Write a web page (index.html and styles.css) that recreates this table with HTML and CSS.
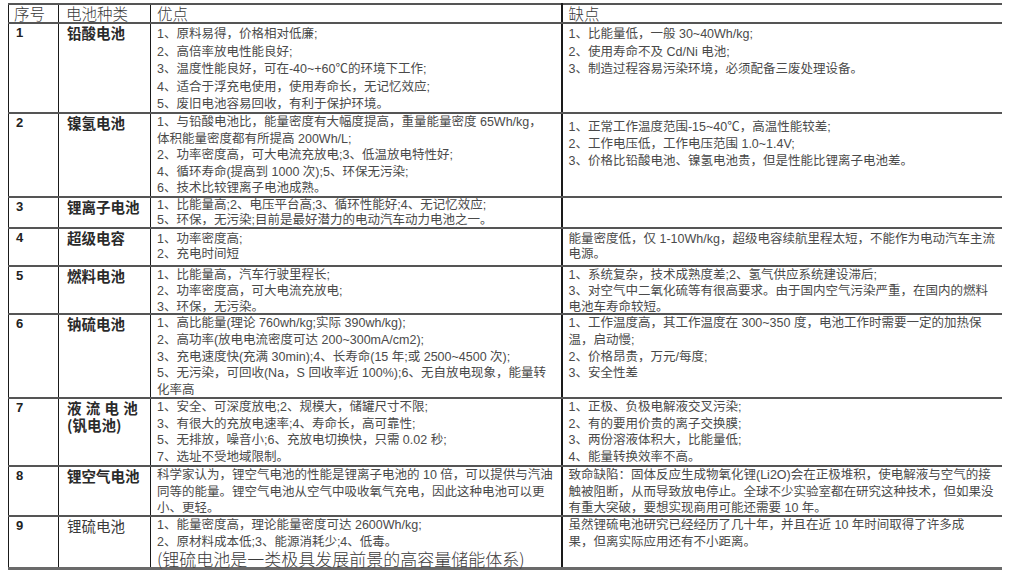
FILE: index.html
```html
<!DOCTYPE html>
<html lang="zh-CN">
<head>
<meta charset="utf-8">
<title>电池种类对比</title>
<link rel="stylesheet" href="styles.css">
</head>
<body>
<table class="cmp">
  <colgroup>
    <col class="c-no"><col class="c-type"><col class="c-pro"><col class="c-con">
  </colgroup>
  <tr class="r-head">
    <th>序号</th><th>电池种类</th><th>优点</th><th>缺点</th>
  </tr>
  <tr class="r1">
    <td class="no">1</td>
    <td class="type">铅酸电池</td>
    <td class="txt">
      <div>1、原料易得，价格相对低廉;</div>
      <div>2、高倍率放电性能良好;</div>
      <div>3、温度性能良好，可在-40~+60℃的环境下工作;</div>
      <div>4、适合于浮充电使用，使用寿命长，无记忆效应;</div>
      <div>5、废旧电池容易回收，有利于保护环境。</div>
    </td>
    <td class="txt">
      <div>1、比能量低，一般 30~40Wh/kg;</div>
      <div>2、使用寿命不及 Cd/Ni 电池;</div>
      <div>3、制造过程容易污染环境，必须配备三废处理设备。</div>
    </td>
  </tr>
  <tr class="r2">
    <td class="no">2</td>
    <td class="type">镍氢电池</td>
    <td class="txt">
      <div>1、与铅酸电池比，能量密度有大幅度提高，重量能量密度 65Wh/kg，</div>
      <div>体积能量密度都有所提高 200Wh/L;</div>
      <div>2、功率密度高，可大电流充放电;3、低温放电特性好;</div>
      <div>4、循环寿命(提高到 1000 次);5、环保无污染;</div>
      <div>6、技术比较锂离子电池成熟。</div>
    </td>
    <td class="txt low">
      <div>1、正常工作温度范围-15~40℃，高温性能较差;</div>
      <div>2、工作电压低，工作电压范围 1.0~1.4V;</div>
      <div>3、价格比铅酸电池、镍氢电池贵，但是性能比锂离子电池差。</div>
    </td>
  </tr>
  <tr class="r3">
    <td class="no">3</td>
    <td class="type">锂离子电池</td>
    <td class="txt">
      <div>1、比能量高;2、电压平台高;3、循环性能好;4、无记忆效应;</div>
      <div>5、环保，无污染;目前是最好潜力的电动汽车动力电池之一。</div>
    </td>
    <td class="txt"></td>
  </tr>
  <tr class="r4">
    <td class="no">4</td>
    <td class="type">超级电容</td>
    <td class="txt">
      <div>1、功率密度高;</div>
      <div>2、充电时间短</div>
    </td>
    <td class="txt">
      <div>能量密度低，仅 1-10Wh/kg，超级电容续航里程太短，不能作为电动汽车主流</div>
      <div>电源。</div>
    </td>
  </tr>
  <tr class="r5">
    <td class="no">5</td>
    <td class="type">燃料电池</td>
    <td class="txt">
      <div>1、比能量高，汽车行驶里程长;</div>
      <div>2、功率密度高，可大电流充放电;</div>
      <div>3、环保，无污染。</div>
    </td>
    <td class="txt">
      <div>1、系统复杂，技术成熟度差;2、氢气供应系统建设滞后;</div>
      <div>3、对空气中二氧化硫等有很高要求。由于国内空气污染严重，在国内的燃料</div>
      <div>电池车寿命较短。</div>
    </td>
  </tr>
  <tr class="r6">
    <td class="no">6</td>
    <td class="type">钠硫电池</td>
    <td class="txt">
      <div>1、高比能量(理论 760wh/kg;实际 390wh/kg);</div>
      <div>2、高功率(放电电流密度可达 200~300mA/cm2);</div>
      <div>3、充电速度快(充满 30min);4、长寿命(15 年;或 2500~4500 次);</div>
      <div>5、无污染，可回收(Na，S 回收率近 100%);6、无自放电现象，能量转</div>
      <div>化率高</div>
    </td>
    <td class="txt">
      <div>1、工作温度高，其工作温度在 300~350 度，电池工作时需要一定的加热保</div>
      <div>温，启动慢;</div>
      <div>2、价格昂贵，万元/每度;</div>
      <div>3、安全性差</div>
    </td>
  </tr>
  <tr class="r7">
    <td class="no">7</td>
    <td class="type">
      <div class="spread">液 流 电 池</div>
      <div>(钒电池)</div>
    </td>
    <td class="txt">
      <div>1、安全、可深度放电;2、规模大，储罐尺寸不限;</div>
      <div>3、有很大的充放电速率;4、寿命长，高可靠性;</div>
      <div>5、无排放，噪音小;6、充放电切换快，只需 0.02 秒;</div>
      <div>7、选址不受地域限制。</div>
    </td>
    <td class="txt">
      <div>1、正极、负极电解液交叉污染;</div>
      <div>2、有的要用价贵的离子交换膜;</div>
      <div>3、两份溶液体积大，比能量低;</div>
      <div>4、能量转换效率不高。</div>
    </td>
  </tr>
  <tr class="r8">
    <td class="no">8</td>
    <td class="type">锂空气电池</td>
    <td class="txt">
      <div>科学家认为，锂空气电池的性能是锂离子电池的 10 倍，可以提供与汽油</div>
      <div>同等的能量。锂空气电池从空气中吸收氧气充电，因此这种电池可以更</div>
      <div>小、更轻。</div>
    </td>
    <td class="txt">
      <div>致命缺陷：固体反应生成物氧化锂(Li2O)会在正极堆积，使电解液与空气的接</div>
      <div>触被阻断，从而导致放电停止。全球不少实验室都在研究这种技术，但如果没</div>
      <div>有重大突破，要想实现商用可能还需要 10 年。</div>
    </td>
  </tr>
  <tr class="r9">
    <td class="no">9</td>
    <td class="type plain">锂硫电池</td>
    <td class="txt">
      <div>1、能量密度高，理论能量密度可达 2600Wh/kg;</div>
      <div>2、原材料成本低;3、能源消耗少;4、低毒。</div>
      <div class="big">(锂硫电池是一类极具发展前景的高容量储能体系)</div>
    </td>
    <td class="txt">
      <div>虽然锂硫电池研究已经经历了几十年，并且在近 10 年时间取得了许多成</div>
      <div>果，但离实际应用还有不小距离。</div>
    </td>
  </tr>
</table>
</body>
</html>
```

FILE: styles.css
```css
html, body {
  background: #ffffff;
}
body {
  margin: 3px 8px 0 8px;
  font-family: "Liberation Sans", "Noto Sans CJK SC", sans-serif;
  color: #4a4a4a;
}
.cmp {
  width: 994px;
  table-layout: fixed;
  border-collapse: collapse;
  font-size: 12.5px;
}
.c-no { width: 50px; }
.c-type { width: 92px; }
.c-pro { width: 411px; }
.c-con { width: 441px; }

.cmp th,
.cmp td {
  border-top: 2px solid #555555;
  border-bottom: 2px solid #555555;
  border-left: 1px solid #1a1a1a;
  border-right: 1px solid #1a1a1a;
  vertical-align: top;
  text-align: left;
  white-space: nowrap;
}
.cmp th:nth-child(3),
.cmp td:nth-child(3) {
  border-right: 2px solid #1a1a1a;
}
.cmp .r9 td {
  border-bottom: 3px solid #6a6a6a;
}
.cmp th {
  font-family: "Noto Sans CJK SC", sans-serif;
  font-weight: 300;
  font-size: 15.5px;
  color: #3a3a3a;
  line-height: 16px;
  padding: 0 6px;
}
.cmp th:first-child { padding-left: 5px; }
.cmp th:nth-child(2) { padding-left: 7px; }

.no {
  font-weight: bold;
  color: #222;
  font-size: 13px;
  padding: 1px 7px 0 7px;
  line-height: 16px;
}
.type {
  font-family: "Noto Sans CJK SC", sans-serif;
  font-weight: bold;
  font-size: 14.5px;
  color: #2a2a2a;
  padding: 0 2px 0 8px;
  line-height: 17px;
}
.type > div { height: 17px; }
.type.plain {
  font-weight: normal;
  color: #3a3a3a;
}
.type .spread {
  word-spacing: 1px;
}
.txt {
  --lh: 16.5px;
  padding: 0 4px 0 6px;
  line-height: var(--lh);
}
.txt > div {
  height: var(--lh);
}
.txt > div:last-child {
  margin-bottom: -6px;
}
.txt.low {
  padding-top: 5px;
  --lh: 17px;
}
.txt > .big {
  font-size: 17px;
  height: 18px;
  line-height: 18px;
  color: #3a3a3a;
  font-family: "Noto Sans CJK SC", sans-serif;
  font-weight: 300;
}

.r-head { height: 19px; }
.r1 { height: 90px; }
.r1 .txt { --lh: 17.5px; padding-top: 2px; }
.r2 { height: 84px; }
.r3 { height: 31px; }
.r3 .txt { --lh: 15px; }
.r4 { height: 38px; }
.r4 .txt { --lh: 15px; padding-top: 3px; }
.r5 { height: 48px; }
.r5 .txt { --lh: 16px; }
.r6 { height: 84px; }
.r6 .txt { --lh: 16.8px; }
.r7 { height: 68px; }
.r8 { height: 50px; }
.r9 { height: 52px; }
```
